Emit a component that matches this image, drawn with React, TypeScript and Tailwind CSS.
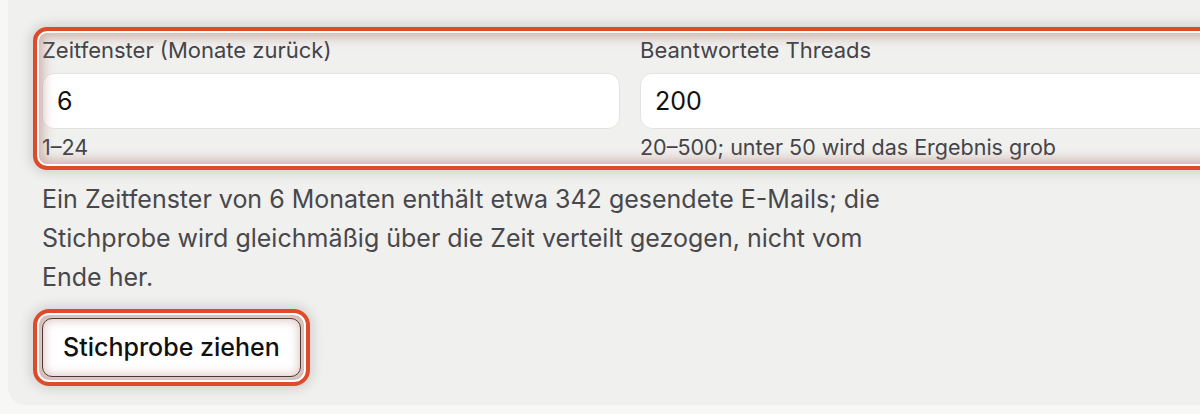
import { useState } from "react";

function Highlight({ rounded }: { rounded: string }) {
  return (
    <div
      className={`pointer-events-none absolute -inset-[9px] border-4 border-[#df4a2a] ${rounded} shadow-[inset_0_0_0_2px_#ffffff,inset_0_0_11px_6px_rgba(175,115,105,0.5),0_0_12px_3px_rgba(0,0,0,0.13)]`}
    />
  );
}

interface FieldProps {
  id: string;
  label: string;
  value: string;
  hint: string;
  onChange: (v: string) => void;
}

function Field({ id, label, value, hint, onChange }: FieldProps) {
  return (
    <div className="flex flex-col">
      <label htmlFor={id} className="text-[22px] leading-[28px] text-[#444448]">
        {label}
      </label>
      <input
        id={id}
        value={value}
        onChange={(e) => onChange(e.target.value)}
        className="mt-[9px] h-[56px] w-full rounded-[12px] border border-[#e3e3e0] bg-white px-[14px] text-[25px] text-[#111] outline-none"
      />
      <span className="mt-[4px] text-[21.5px] leading-[28px] text-[#444448]">{hint}</span>
    </div>
  );
}

export default function App() {
  const [months, setMonths] = useState("6");
  const [threads, setThreads] = useState("200");

  return (
    <div className="h-[414px] overflow-hidden bg-[#f7f7f6] pl-[8px] font-['Inter',sans-serif]">
      <div className="w-[1260px] rounded-bl-[18px] bg-[#f0f0ee] pl-[34px] pt-[36px] pb-[28px]">
        <div className="relative w-[1176px]">
          <div className="grid grid-cols-2 gap-[20px]">
            <Field
              id="months"
              label="Zeitfenster (Monate zurück)"
              value={months}
              hint="1–24"
              onChange={setMonths}
            />
            <Field
              id="threads"
              label="Beantwortete Threads"
              value={threads}
              hint="20–500; unter 50 wird das Ergebnis grob"
              onChange={setThreads}
            />
          </div>
          <Highlight rounded="rounded-[14px]" />
        </div>

        <p className="mt-[19px] max-w-[880px] text-[25px] leading-[39px] text-[#48484c]">
          Ein Zeitfenster von 6 Monaten enthält etwa 342 gesendete E-Mails; die Stichprobe wird
          gleichmäßig über die Zeit verteilt gezogen, nicht vom Ende her.
        </p>

        <div className="relative mt-[21px] inline-block">
          <button className="h-[59px] rounded-[10px] border border-[#2b2222] bg-white px-[20px] text-[25px] font-medium text-[#111]">
            Stichprobe ziehen
          </button>
          <Highlight rounded="rounded-[16px]" />
        </div>
      </div>
    </div>
  );
}
